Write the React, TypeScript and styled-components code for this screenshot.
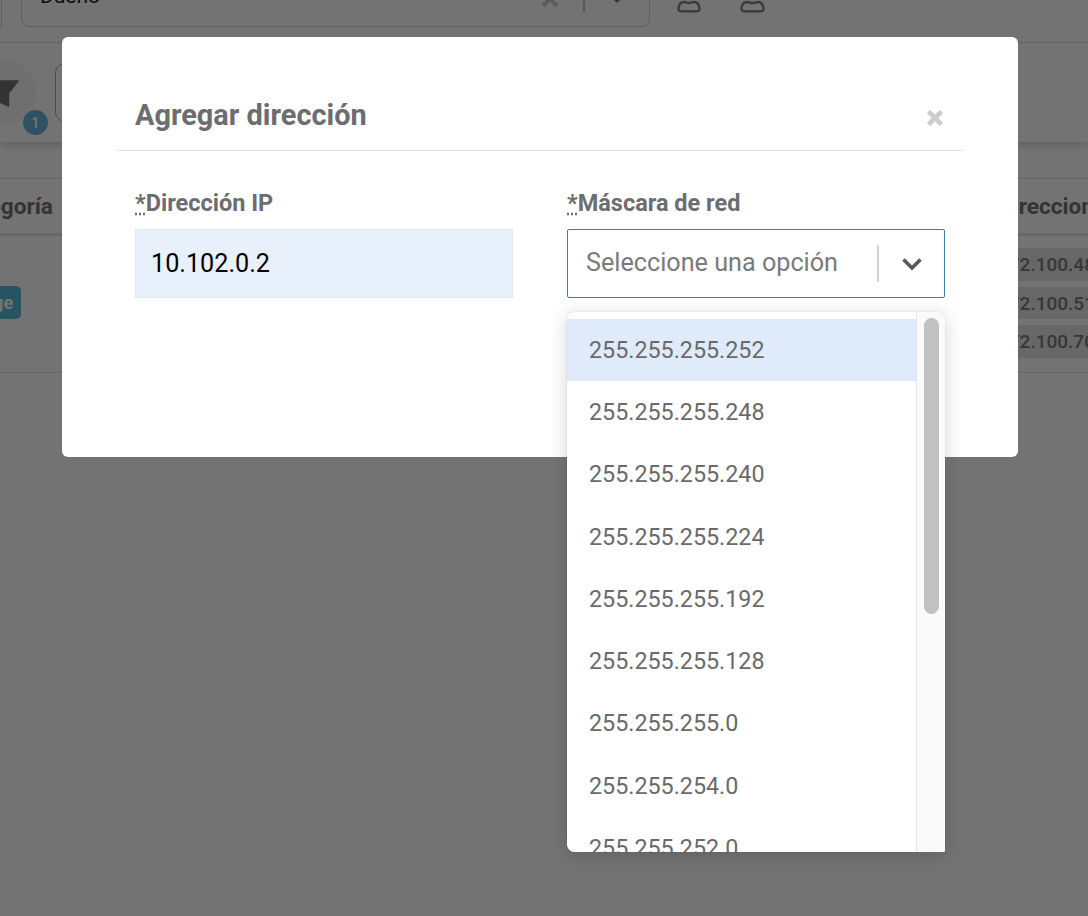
import styled, { createGlobalStyle } from "styled-components";

const maskOptions = [
  "255.255.255.252",
  "255.255.255.248",
  "255.255.255.240",
  "255.255.255.224",
  "255.255.255.192",
  "255.255.255.128",
  "255.255.255.0",
  "255.255.254.0",
  "255.255.252.0",
];

const GlobalStyle = createGlobalStyle`
  html, body {
    margin: 0;
    height: 100%;
    background: #fff;
    font-family: Roboto, "Liberation Sans", sans-serif;
  }
  * {
    box-sizing: border-box;
  }
`;

const Page = styled.div`
  width: 1088px;
  height: 916px;
  overflow: hidden;
  display: flex;
  flex-direction: column;
`;

const TopBar = styled.div`
  height: 43px;
  flex: none;
  display: flex;
  align-items: flex-start;
  gap: 19px;
  border-bottom: 1px solid #dcdcdc;
  overflow: hidden;
`;

const TopField = styled.div`
  width: 629px;
  height: 59px;
  margin-top: -32px;
  flex: none;
  display: flex;
  align-items: center;
  padding-left: 18px;
  border: 1px solid #d0d0d0;
  border-radius: 8px;
  font-size: 21px;
  color: #222;
`;

const ClippedField = styled(TopField)`
  width: 2px;
  padding-left: 0;
  border-left: none;
  border-radius: 0 8px 8px 0;
`;

const TopFieldText = styled.span`
  flex: 1;
  margin-bottom: 4px;
`;

const TopFieldDivider = styled.span`
  width: 2px;
  height: 29px;
  margin: 0 25px 0 24px;
  background: #c4c4c4;
`;

const TopFieldCaret = styled.svg`
  margin-right: 25px;
`;

const PersonGroup = styled.div`
  display: flex;
  gap: 39px;
  margin-left: 8px;
`;

const Toolbar = styled.div`
  height: 99px;
  flex: none;
  display: flex;
  align-items: flex-start;
  padding-top: 17px;
  box-shadow: 0 4px 8px rgba(0, 0, 0, 0.15);
`;

const FilterCircle = styled.div`
  position: relative;
  width: 66px;
  height: 66px;
  margin-left: -30px;
  flex: none;
  display: flex;
  align-items: center;
  justify-content: center;
  border-radius: 50%;
  background: #f7f7f7;
`;

const FilterBadge = styled.span`
  position: absolute;
  right: -12px;
  bottom: -9px;
  width: 25px;
  height: 25px;
  border-radius: 50%;
  background: #68b6d6;
  color: #fff;
  font-size: 14px;
  font-weight: 500;
  display: flex;
  align-items: center;
  justify-content: center;
`;

const OutlineButton = styled.div`
  width: 200px;
  height: 59px;
  margin: 3px 0 0 19px;
  border: 1px solid #7fb8d4;
  border-radius: 10px;
`;

const TableHead = styled.div`
  margin-top: 36px;
  height: 58px;
  flex: none;
  display: flex;
  align-items: center;
  justify-content: space-between;
  border-top: 1px solid #e0e0e0;
  border-bottom: 3px solid #e4e4e4;
  font-size: 22.6px;
  font-weight: 700;
  color: #727272;
`;

const CategoryHead = styled.span`
  margin-left: -46px;
`;

const AddressHead = styled.span`
  width: 90px;
  white-space: nowrap;
`;

const TableRow = styled.div`
  height: 137px;
  flex: none;
  display: flex;
  align-items: center;
  justify-content: space-between;
  border-bottom: 1px solid #dedede;
`;

const CategoryTag = styled.span`
  height: 33px;
  margin-left: -35px;
  margin-top: -4px;
  padding: 0 8px;
  display: flex;
  align-items: center;
  border-radius: 5px;
  background: #50bcd6;
  color: #fff;
  font-size: 18px;
  font-weight: 700;
`;

const AddressList = styled.div`
  width: 100px;
  margin-top: -2px;
  display: flex;
  flex-direction: column;
  gap: 6px;
`;

const AddressChip = styled.span`
  height: 32.5px;
  padding-left: 10px;
  display: flex;
  align-items: center;
  white-space: nowrap;
  background: #e4e4e4;
  font-size: 19px;
  font-weight: 500;
  color: #7a7a7a;
`;

const Backdrop = styled.div`
  position: fixed;
  inset: 0;
  padding: 37px 8px 0 0;
  display: flex;
  justify-content: center;
  background: rgba(0, 0, 0, 0.55);
`;

const Modal = styled.div`
  width: 956px;
  height: 420px;
  padding: 0 55px;
  background: #fff;
  border-radius: 6px;
`;

const ModalHeader = styled.div`
  height: 114px;
  padding: 0 19px 0 18px;
  display: flex;
  align-items: flex-end;
  justify-content: space-between;
  border-bottom: 1px solid #e3e3e3;
`;

const ModalTitle = styled.h2`
  margin: 0 0 17px;
  font-size: 28.9px;
  line-height: 36px;
  font-weight: 700;
  color: #6b6d70;
`;

const CloseButton = styled.button`
  width: 18px;
  height: 18px;
  margin-bottom: 23px;
  padding: 0;
  border: none;
  background: none;
  display: flex;
`;

const FormRow = styled.div`
  display: grid;
  grid-template-columns: 378px 378px;
  gap: 54px;
  padding: 38px 18px 0;
`;

const Field = styled.div`
  position: relative;
  display: flex;
  flex-direction: column;
  gap: 12px;
`;

const Label = styled.label`
  font-size: 23.5px;
  line-height: 28px;
  font-weight: 700;
  color: #6b6d70;
`;

const Required = styled.abbr`
  text-decoration: underline dotted #6b6d70;
`;

const TextInput = styled.div`
  height: 69px;
  padding-left: 15px;
  display: flex;
  align-items: center;
  background: #e8f0fc;
  border: 1px solid #e2e8f2;
  font-size: 25.2px;
  color: #000;
`;

const SelectControl = styled.div`
  height: 69px;
  padding-left: 18px;
  display: flex;
  align-items: center;
  border: 1px solid #3f7fa8;
  border-radius: 2px;
`;

const Placeholder = styled.span`
  flex: 1;
  margin-bottom: 2px;
  font-size: 25.2px;
  color: #7a7a7a;
`;

const SelectSeparator = styled.span`
  width: 2px;
  height: 37px;
  background: #d2d2d2;
`;

const ChevronBox = styled.span`
  width: 65px;
  display: flex;
  justify-content: center;
`;

const Menu = styled.div`
  position: absolute;
  top: 123px;
  left: 0;
  width: 378px;
  height: 540px;
  display: flex;
  overflow: hidden;
  background: #fff;
  border-radius: 6px 6px 2px 8px;
  box-shadow: 0 0 1px rgba(0, 0, 0, 0.35), 0 4px 20px rgba(0, 0, 0, 0.16);
`;

const OptionList = styled.div`
  flex: 1;
  min-width: 0;
  padding-top: 7px;
  overflow: hidden;
`;

const Option = styled.div<{ $active?: boolean }>`
  height: 62.3px;
  padding: 0 0 1px 22px;
  display: flex;
  align-items: center;
  background: ${(props) => (props.$active ? "#dfeafb" : "#fff")};
  font-size: 23.3px;
  color: #6a6a6a;
`;

const ScrollTrack = styled.div`
  width: 29px;
  flex: none;
  padding: 6px 6px 0 7px;
  background: #fafafa;
  border-left: 1px solid #e6e6e6;
`;

const ScrollThumb = styled.div`
  height: 296px;
  border-radius: 8px;
  background: #c1c1c1;
`;

const App = () => {
  return (
    <>
      <GlobalStyle />
      <Page>
        <TopBar>
          <ClippedField />
          <TopField>
            <TopFieldText>Dueño</TopFieldText>
            <svg width="18" height="29" viewBox="0 0 18 29">
              <path d="M2 9l14 14M16 9L2 23" stroke="#ccc" strokeWidth="4" />
            </svg>
            <TopFieldDivider />
            <TopFieldCaret width="14" height="29" viewBox="0 0 14 29" fill="none">
              <path d="M1 12l6 6 6-6" stroke="#777" strokeWidth="3" />
            </TopFieldCaret>
          </TopField>
          <PersonGroup>
            <svg width="24" height="13" viewBox="0 0 24 13" fill="none">
              <path d="M4 11.300h16c1.500 0 2.800-1 2.500-3C22 4.800 20 2 17 2c-2 0-3.200 1-5 1S9 2 7 2C4 2 2 4.800 1.500 8.300 1.200 10.300 2.500 11.300 4 11.300z" stroke="#808080" strokeWidth="2.300" />
            </svg>
            <svg width="25" height="13" viewBox="0 0 25 13" fill="none">
              <path d="M4 11.300h17c1.500 0 2.800-1 2.500-3C23 4.800 21 2 18 2c-2 0-3.700 1-5.500 1S9 2 7 2C4 2 2 4.800 1.500 8.300 1.200 10.300 2.500 11.300 4 11.300z" stroke="#808080" strokeWidth="2.300" />
            </svg>
          </PersonGroup>
        </TopBar>
        <Toolbar>
          <FilterCircle>
            <svg width="32" height="27" viewBox="0 0 32 27">
              <path d="M1 1h30L21.500 13v13L10.500 21V13z" fill="#727272" stroke="#727272" strokeWidth="1.500" strokeLinejoin="round" />
            </svg>
            <FilterBadge>1</FilterBadge>
          </FilterCircle>
          <OutlineButton />
        </Toolbar>
        <TableHead>
          <CategoryHead>Categoría</CategoryHead>
          <AddressHead>Direcciones</AddressHead>
        </TableHead>
        <TableRow>
          <CategoryTag>Edge</CategoryTag>
          <AddressList>
            <AddressChip>172.100.48.0</AddressChip>
            <AddressChip>172.100.51.0</AddressChip>
            <AddressChip>172.100.70.0</AddressChip>
          </AddressList>
        </TableRow>
      </Page>
      <Backdrop>
        <Modal>
          <ModalHeader>
            <ModalTitle>Agregar dirección</ModalTitle>
            <CloseButton aria-label="Cerrar">
              <svg width="18" height="18" viewBox="0 0 18 18">
                <path d="M2.500 2.500l13 13M15.500 2.500l-13 13" stroke="#cdcdcd" strokeWidth="4.600" />
              </svg>
            </CloseButton>
          </ModalHeader>
          <FormRow>
            <Field>
              <Label>
                <Required>*</Required>Dirección IP
              </Label>
              <TextInput>10.102.0.2</TextInput>
            </Field>
            <Field>
              <Label>
                <Required>*</Required>Máscara de red
              </Label>
              <SelectControl>
                <Placeholder>Seleccione una opción</Placeholder>
                <SelectSeparator />
                <ChevronBox>
                  <svg width="22" height="14" viewBox="0 0 22 14" fill="none">
                    <path d="M2.500 2.500L11 11l8.500-8.500" stroke="#5a5a5a" strokeWidth="3.600" />
                  </svg>
                </ChevronBox>
              </SelectControl>
              <Menu>
                <OptionList>
                  {maskOptions.map((option, index) => (
                    <Option key={option} $active={index === 0}>
                      {option}
                    </Option>
                  ))}
                </OptionList>
                <ScrollTrack>
                  <ScrollThumb />
                </ScrollTrack>
              </Menu>
            </Field>
          </FormRow>
        </Modal>
      </Backdrop>
    </>
  );
};

export default App;
